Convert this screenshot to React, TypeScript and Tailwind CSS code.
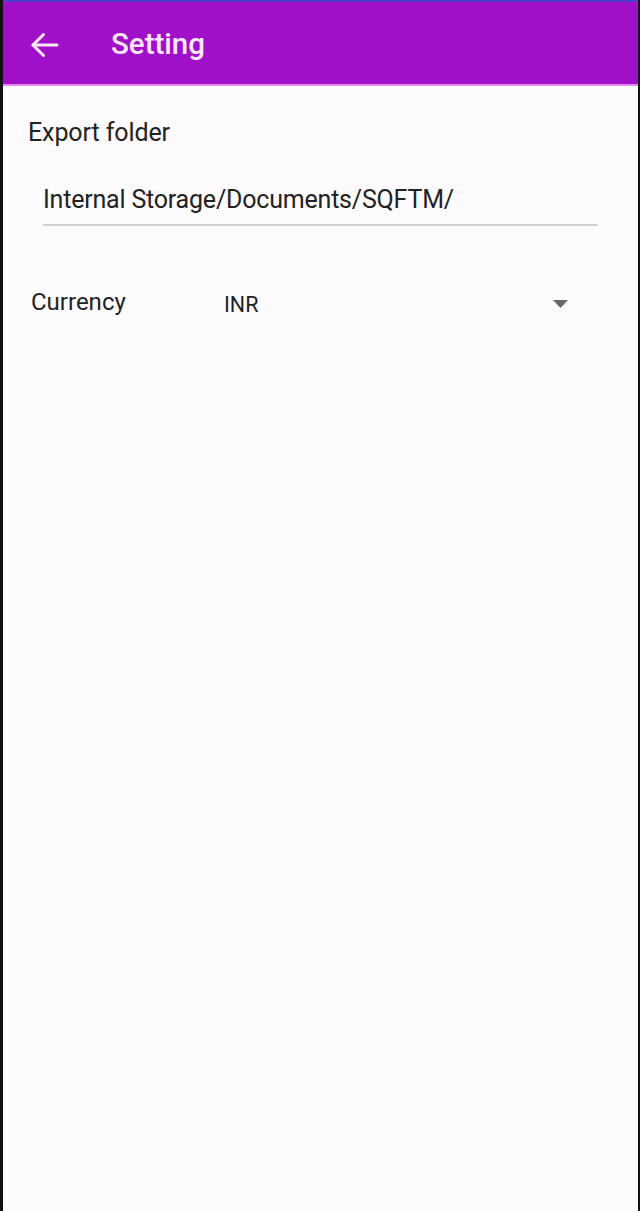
import React from "react";

export default function App() {
  return (
    <div className="w-[640px] h-[1211px] flex bg-black" style={{ fontFamily: "Roboto, 'Noto Sans', sans-serif" }}>
      <div className="w-[3px] bg-[#111]" />
      <div className="flex-1 flex flex-col bg-[#fdfbfd]">
        <div className="h-[2px] bg-[#4a3fd0]" />
        <div className="h-[82px] pt-[4px] bg-[#a010c8] flex items-center">
          <svg className="ml-[24px] w-[36px] h-[36px]" viewBox="0 0 24 24" fill="none" stroke="#fbe6fb" strokeWidth="2" strokeLinecap="round" strokeLinejoin="round">
            <path d="M20 12H4" />
            <path d="M11 5l-7 7 7 7" />
          </svg>
          <span className="ml-[48px] text-[29.5px] font-medium text-[#fbe6fb] leading-none">Setting</span>
        </div>
        <div className="h-[2px] bg-[#e58cf0]" />
        <div className="px-[25px] pt-[34px] text-[25px] text-[#222] leading-none tracking-[-0.1px]">Export folder</div>
        <div className="ml-[40px] mr-[40px] mt-[42px] text-[25px] text-[#222] leading-none tracking-[-0.2px]">Internal Storage/Documents/SQFTM/</div>
        <div className="ml-[40px] mr-[40px] mt-[12px] h-[2px] bg-[#cfcfcf]" />
        <div className="flex items-start mt-[64px]">
          <span className="ml-[28px] w-[193px] text-[24px] text-[#222] leading-none">Currency</span>
          <span className="text-[21.5px] text-[#222] leading-none mt-[4px]">INR</span>
          <div className="flex-1" />
          <svg className="mr-[70px] mt-[10px] w-[15px] h-[8px]" viewBox="0 0 15 8">
            <path d="M0 0h15L7.5 8z" fill="#666" />
          </svg>
        </div>
      </div>
      <div className="w-[2px] bg-[#111]" />
    </div>
  );
}
